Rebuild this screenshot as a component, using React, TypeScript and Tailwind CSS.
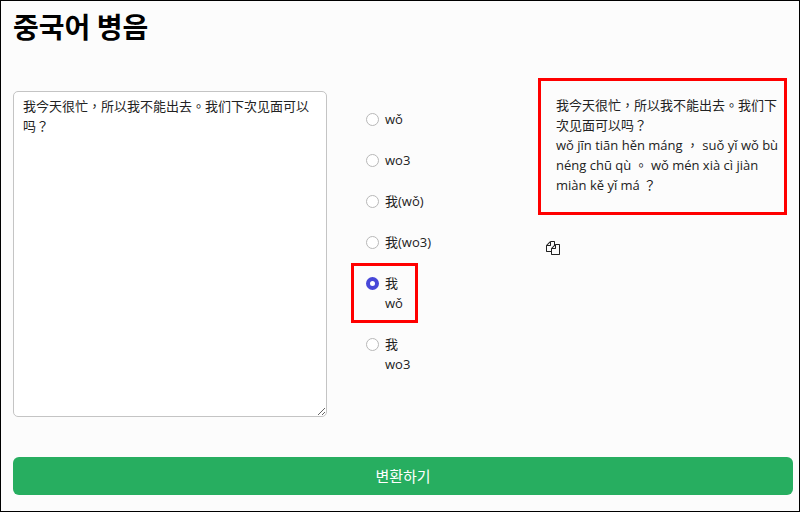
import { useState } from 'react'
import type { FormEvent } from 'react'
import clsx from 'clsx'

interface FormatOption {
  id: string
  lines: string[]
}

const SAMPLE_TEXT = '我今天很忙，所以我不能出去。我们下次见面可以吗？'
const SAMPLE_PINYIN =
  'wǒ jīn tiān hěn máng ， suǒ yǐ wǒ bù néng chū qù 。 wǒ mén xià cì jiàn miàn kě yǐ má ？'

const formatOptions: FormatOption[] = [
  { id: 'mark', lines: ['wǒ'] },
  { id: 'number', lines: ['wo3'] },
  { id: 'inline-mark', lines: ['我(wǒ)'] },
  { id: 'inline-number', lines: ['我(wo3)'] },
  { id: 'stacked-mark', lines: ['我', 'wǒ'] },
  { id: 'stacked-number', lines: ['我', 'wo3'] }
]

function CopyIcon() {
  return (
    <svg viewBox="0 0 1792 1792" className="size-3.5 fill-current" aria-hidden="true">
      <path d="M1696 384q40 0 68 28t28 68v1216q0 40-28 68t-68 28h-960q-40 0-68-28t-28-68v-288h-544q-40 0-68-28t-28-68v-672q0-40 20-88t48-76l408-408q28-28 76-48t88-20h416q40 0 68 28t28 68v328q68-40 128-40h416zm-544 213l-299 299h299v-299zm-640-384l-299 299h299v-299zm196 647l316-316v-416h-384v416q0 40-28 68t-68 28h-416v640h512v-256q0-40 20-88t48-76zm956 804v-1152h-384v416q0 40-28 68t-68 28h-416v640h896z" />
    </svg>
  )
}

function FormatRadio({
  option,
  checked,
  onSelect
}: {
  option: FormatOption
  checked: boolean
  onSelect: (id: string) => void
}) {
  return (
    <label
      className={clsx(
        'flex items-start gap-1.5 border-3 py-[7px] pr-3 pl-3',
        checked ? 'border-[#ff0000]' : 'border-transparent'
      )}
    >
      <input
        type="radio"
        name="format"
        value={option.id}
        checked={checked}
        onChange={() => onSelect(option.id)}
        className="mt-1 size-[13px] shrink-0 appearance-none rounded-full border border-[#b8b8b8] bg-white checked:border-4 checked:border-[#4747d8]"
      />
      <span>
        {option.lines.map((line) => (
          <span key={line} className="block">
            {line}
          </span>
        ))}
      </span>
    </label>
  )
}

export default function App() {
  const [text, setText] = useState(SAMPLE_TEXT)
  const [format, setFormat] = useState('stacked-mark')

  const handleSubmit = (e: FormEvent) => {
    e.preventDefault()
  }

  return (
    <main className="min-h-screen border border-black bg-[#fcfcfc] px-3 pt-[7px] pr-1.5 pb-3.5 font-['Open_Sans','Noto_Sans_CJK_TC',sans-serif] text-[13px] leading-5 text-[#222]">
      <h1 className="font-['Noto_Sans_CJK_KR',sans-serif] text-[28px] leading-9 font-bold text-black">
        중국어 병음
      </h1>

      <form onSubmit={handleSubmit}>
        {/* Source text, output format, result */}
        <div className="mt-[34px] grid grid-cols-[314fr_163fr_255fr] items-start gap-6">
          <textarea
            aria-label="중국어"
            value={text}
            onChange={(e) => setText(e.target.value)}
            className="mt-[13px] block h-[326px] w-full resize rounded-[5px] border border-[#c4c4c4] bg-white px-[9px] py-1"
          />

          <fieldset className="mt-[21px] flex flex-col items-start gap-px">
            {formatOptions.map((option) => (
              <FormatRadio
                key={option.id}
                option={option}
                checked={option.id === format}
                onSelect={setFormat}
              />
            ))}
          </fieldset>

          <div>
            <output className="mr-1.5 block border-3 border-[#ff0000] pt-[14px] pr-[3px] pb-[17px] pl-[15px]">
              <p>{text}</p>
              <p>{SAMPLE_PINYIN}</p>
            </output>
            <button type="button" aria-label="복사" className="mt-[26px] ml-2 block text-[#222]">
              <CopyIcon />
            </button>
          </div>
        </div>

        <button
          type="submit"
          className="mt-10 block w-full rounded-md bg-[#27ae60] py-[9px] font-['Noto_Sans_CJK_KR',sans-serif] text-[15px] leading-5 text-white"
        >
          변환하기
        </button>
      </form>
    </main>
  )
}
